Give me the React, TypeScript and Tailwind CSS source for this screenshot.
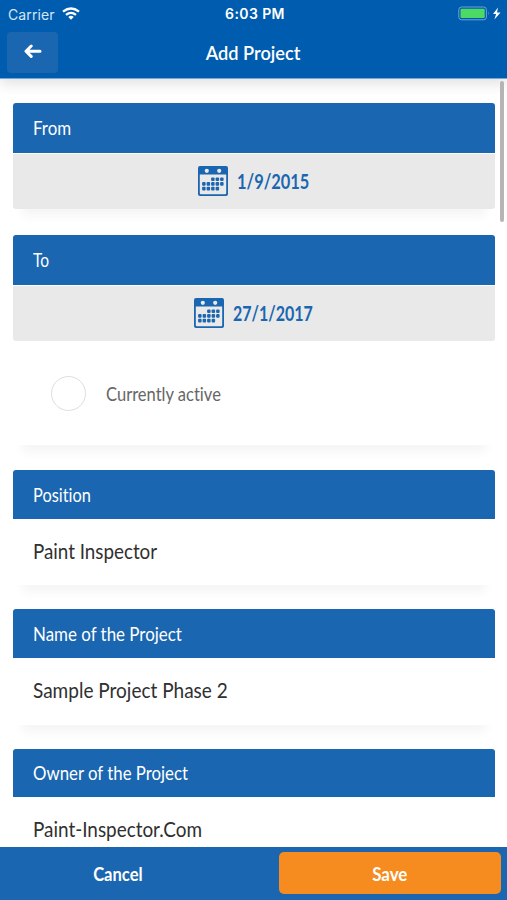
import React from "react";

function Calendar() {
  const dots: [number, number][] = [];
  for (let row = 0; row < 3; row++) {
    for (let col = 0; col < 5; col++) {
      if ((row === 0 && col < 2) || (row === 2 && col === 4)) continue;
      dots.push([4.1 + col * 4.5, 11.4 + row * 4.7]);
    }
  }
  return (
    <svg className="h-[30px] w-[30px] shrink-0" viewBox="0 0 30 30" fill="#1a66b0">
      <path
        fillRule="evenodd"
        d="M2 0H28Q30 0 30 2V28Q30 30 28 30H2Q0 30 0 28V2Q0 0 2 0ZM1.8 8.5V27.2Q1.8 28.3 2.9 28.3H27.1Q28.2 28.3 28.2 27.2V8.5Z"
      />
      <circle cx="8.8" cy="4.8" r="2.1" fill="#ebebeb" />
      <circle cx="21.2" cy="4.8" r="2.1" fill="#ebebeb" />
      {dots.map(([x, y]) => (
        <rect key={`${x}-${y}`} x={x} y={y} width="3.5" height="3.6" rx="1" />
      ))}
    </svg>
  );
}

function Text({ className, children }: { className: string; children: string }) {
  return <span className={`inline-block whitespace-nowrap ${className}`}>{children}</span>;
}

const cardShadow = "shadow-[0_16px_10px_-9px_rgba(0,0,0,0.045)]";

function CardTitle({ fit, height, children }: { fit: string; height: string; children: string }) {
  return (
    <div className={`flex items-center rounded-t-[3px] bg-[#1a66b0] pl-5 pt-px text-white ${height}`}>
      <Text className={`origin-left text-[19px] ${fit}`}>{children}</Text>
    </div>
  );
}

function DateRow({ fit, width, children }: { fit: string; width: string; children: string }) {
  return (
    <div className="mt-px flex h-[55px] items-center justify-center gap-[9px] rounded-b-[3px] bg-[#e9e9e9] pb-[2px] text-[#1a66b0]">
      <Calendar />
      <div className={width}>
        <Text className={`origin-left text-[20px] font-bold ${fit}`}>{children}</Text>
      </div>
    </div>
  );
}

function Field({ label, labelFit, value, valueFit }: { label: string; labelFit: string; value: string; valueFit: string }) {
  return (
    <section className={`mb-6 h-[115.3px] shrink-0 rounded-[3px] bg-white ${cardShadow}`}>
      <CardTitle fit={labelFit} height="h-[48.5px]">{label}</CardTitle>
      <div className="flex h-[66px] items-center pb-[2px] pl-5 text-[#303030]">
        <Text className={`origin-left text-[21px] ${valueFit}`}>{value}</Text>
      </div>
    </section>
  );
}

export default function App() {
  return (
    <div className="flex h-[900px] w-[507px] flex-col overflow-hidden bg-white font-['Lato','Open_Sans',sans-serif] [font-variant-ligatures:none]">
      <header className="relative z-10 h-[79px] shrink-0 border-b border-[#75a9dc] bg-[#005cae] text-white shadow-[0_5px_12px_rgba(60,50,40,0.14)]">
        <div className="grid h-7 grid-cols-3 items-center pl-2 pr-[6px] font-['Inter',sans-serif] text-[14px]">
          <div className="flex items-center gap-[7px]">
            <span className="w-[47px] whitespace-nowrap text-[14px] tracking-[0.1px] text-[#d5e6f7]">Carrier</span>
            <svg className="-mt-[2px] h-[13px] w-[18px]" viewBox="0 0 18 13" fill="none" stroke="white" strokeWidth="2.3">
              <path d="M1 4.7Q9-1.7 17 4.7M4 7.9Q9 3.8 14 7.9" />
              <path d="M6.3 9.9Q9 7.7 11.7 9.9L9 12.8Z" fill="white" stroke="none" />
            </svg>
          </div>
          <span className="-mt-px whitespace-nowrap pl-px text-center text-[14px] font-semibold tracking-[0.4px]">6:03 PM</span>
          <div className="-mt-[2px] flex items-center justify-end">
            <svg className="h-[15px] w-[43px]" viewBox="0 0 43 15">
              <rect x="0.8" y="1" width="27.6" height="12.8" rx="2.7" fill="none" stroke="#6ba7ce" strokeWidth="1" />
              <rect x="2.5" y="2.8" width="24.2" height="9.2" rx="1" fill="#4cd964" />
              <path d="M30 5.3Q31.5 7.3 30 9.5Z" fill="#6ba7ce" />
              <path d="M40 1.5L35 8H38.1L36.4 13.5L42.5 6.4H39Z" fill="white" />
            </svg>
          </div>
        </div>
        <div className="grid h-12 grid-cols-[51px_1fr_51px] items-center px-[7px]">
          <button className="flex h-[41px] items-center justify-center rounded-[4px] bg-[#1a66b0]">
            <svg className="-mt-px h-[15px] w-[18px]" viewBox="0 0 18 15" fill="none" stroke="white" strokeWidth="3" strokeLinecap="round" strokeLinejoin="round">
              <path d="M16 7.2H2.5M7.2 2L2 7.2L7.2 12.4" />
            </svg>
          </button>
          <h1 className="flex justify-center pb-px">
            <Text className="scale-x-[.91] text-[20px] font-semibold">Add Project</Text>
          </h1>
        </div>
      </header>

      <div className="relative flex h-[768px] shrink-0 flex-col overflow-hidden pl-[13px] pr-3 pt-6">
        <section className={`mb-[26px] shrink-0 rounded-[4px] ${cardShadow}`}>
          <CardTitle fit="scale-x-[.89]" height="h-[50px]">From</CardTitle>
          <DateRow fit="scale-x-[.82]" width="w-[73px]">1/9/2015</DateRow>
        </section>
        <section className={`mb-[25px] h-[210px] shrink-0 rounded-[3px] bg-white ${cardShadow}`}>
          <CardTitle fit="scale-x-[.82]" height="h-[50px]">To</CardTitle>
          <DateRow fit="scale-x-[.8]" width="w-[81px]">27/1/2017</DateRow>
          <div className="flex h-[105px] items-center gap-5 pl-[38px] text-[#666]">
            <span className="h-[35px] w-[35px] rounded-full border-[1.5px] border-[#dedede]" />
            <Text className="origin-left scale-x-[.87] pt-px text-[19px]">Currently active</Text>
          </div>
        </section>
        <Field label="Position" labelFit="scale-x-[.86]" value="Paint Inspector" valueFit="scale-x-[.895]" />
        <Field label="Name of the Project" labelFit="scale-x-[.89]" value="Sample Project Phase 2" valueFit="scale-x-[.905]" />
        <Field label="Owner of the Project" labelFit="scale-x-[.885]" value="Paint-Inspector.Com" valueFit="scale-x-[.9]" />
        <div className="absolute right-[3px] top-[2px] z-20 h-[141px] w-[4px] rounded-full bg-[#b5b5b5]" />
      </div>

      <footer className="flex h-[53px] shrink-0 bg-[#1a66b0] pb-[6px] pr-[6px] pt-[5px] text-[18px] font-bold text-white">
        <button className="flex w-[279px] items-center justify-center pr-[43px] pt-[2px]">
          <Text className="scale-x-[.92]">Cancel</Text>
        </button>
        <button className="flex flex-1 items-center justify-center rounded-[5px] bg-[#f68b1f] pt-[2px]">
          <Text className="scale-x-[.94]">Save</Text>
        </button>
      </footer>
    </div>
  );
}
